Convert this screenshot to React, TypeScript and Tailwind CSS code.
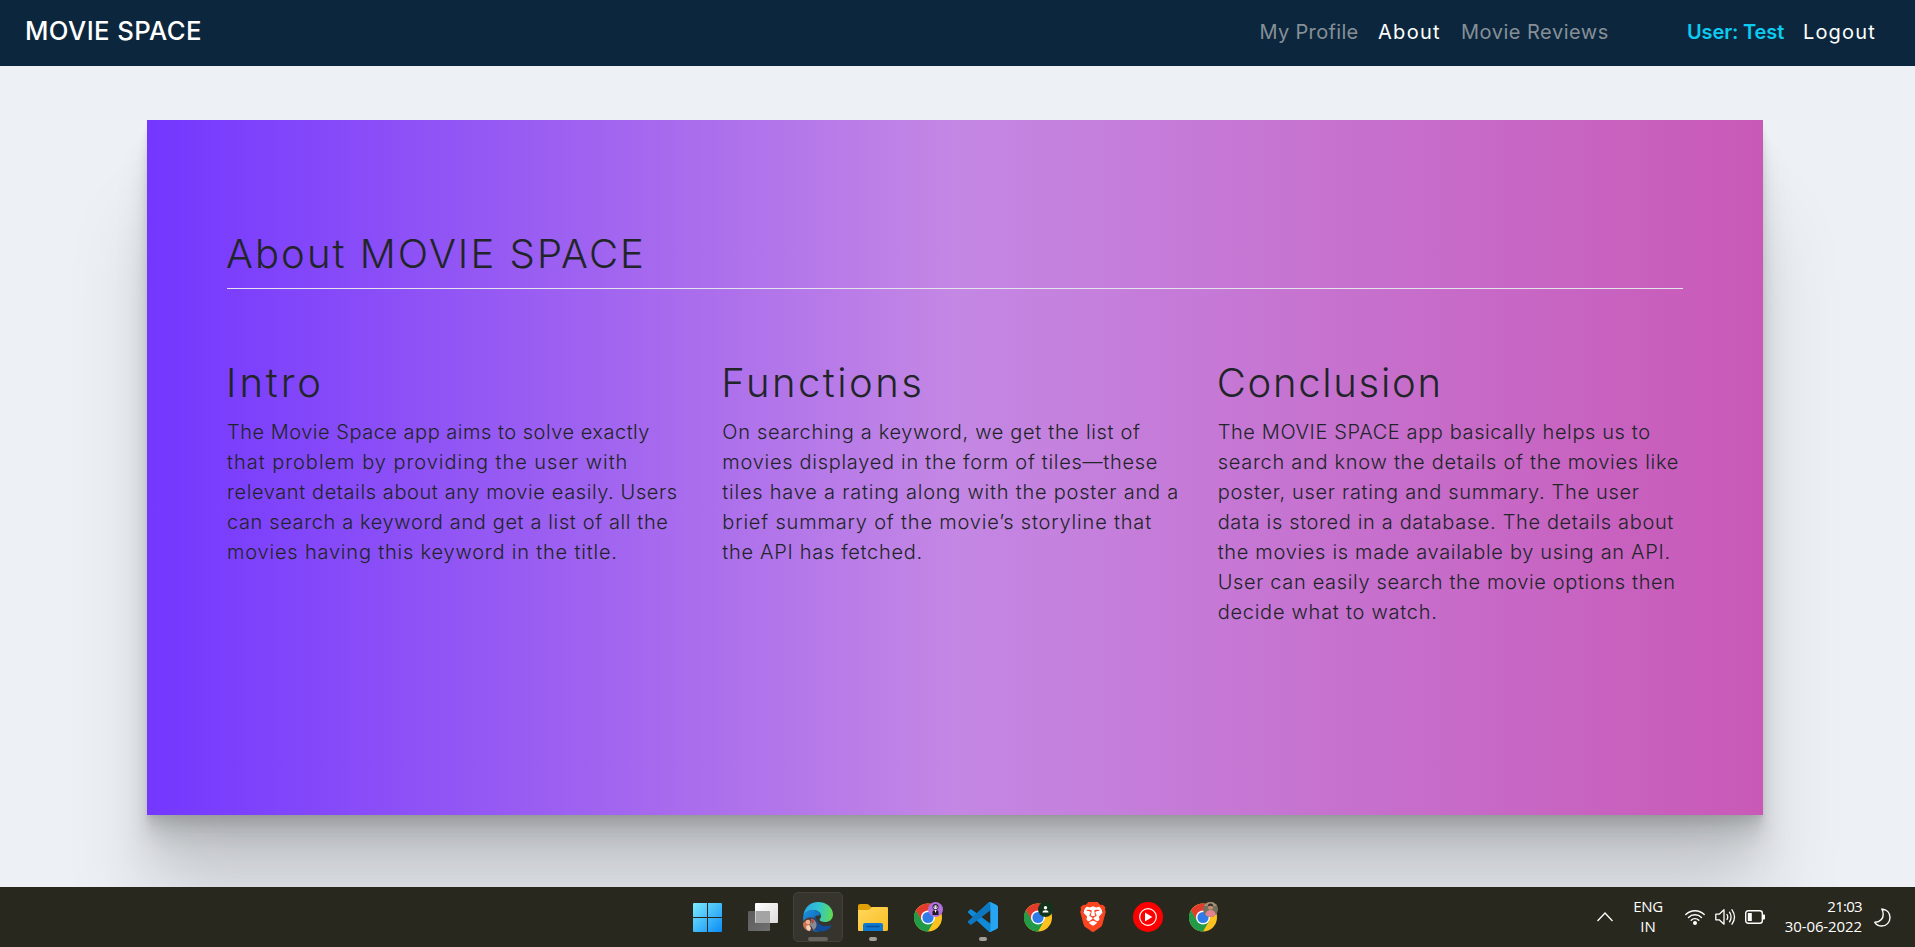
import type { ReactNode } from "react";
import { SiBrave } from "react-icons/si";

type Line = [text: string, tracking: string];

const intro: Line[] = [
  ["The Movie Space app aims to solve exactly", "tracking-[0.51px]"],
  ["that problem by providing the user with", "tracking-[0.975px]"],
  ["relevant details about any movie easily. Users", "tracking-[0.6px]"],
  ["can search a keyword and get a list of all the", "tracking-[0.625px]"],
  ["movies having this keyword in the title.", "tracking-[0.805px]"],
];

const functions: Line[] = [
  ["On searching a keyword, we get the list of", "tracking-[0.675px]"],
  ["movies displayed in the form of tiles—these", "tracking-[0.71px]"],
  ["tiles have a rating along with the poster and a", "tracking-[0.775px]"],
  ["brief summary of the movie’s storyline that", "tracking-[0.815px]"],
  ["the API has fetched.", "tracking-[0.695px]"],
];

const conclusion: Line[] = [
  ["The MOVIE SPACE app basically helps us to", "tracking-[0.61px]"],
  ["search and know the details of the movies like", "tracking-[0.72px]"],
  ["poster, user rating and summary. The user", "tracking-[0.695px]"],
  ["data is stored in a database. The details about", "tracking-[0.645px]"],
  ["the movies is made available by using an API.", "tracking-[0.685px]"],
  ["User can easily search the movie options then", "tracking-[0.645px]"],
  ["decide what to watch.", "tracking-[0.74px]"],
];

function Column({ title, tracking, lines }: { title: string; tracking: string; lines: Line[] }) {
  return (
    <section>
      <h2 className={`mb-[10px] -ml-px whitespace-nowrap text-[40px] font-light leading-[48px] ${tracking}`}>{title}</h2>
      <p className="text-[20px] font-light leading-[30px]">
        {lines.map(([text, t]) => (
          <span key={text} className={`block whitespace-nowrap ${t}`}>
            {text}
          </span>
        ))}
      </p>
    </section>
  );
}

function Task({ children, active, running }: { children: ReactNode; active?: boolean; running?: boolean }) {
  return (
    <div
      className={`relative flex h-[50px] w-[50px] items-center justify-center rounded-[5px] ${
        active ? "border border-[#44413a] bg-[#35342d]" : ""
      }`}
    >
      {children}
      {active && <span className="absolute bottom-0 h-1 w-5 rounded-full bg-[#66625e]" />}
      {running && <span className="absolute bottom-px h-1 w-2 rounded-full bg-[#a19d98]" />}
    </div>
  );
}

function Chrome({ children }: { children?: ReactNode }) {
  return (
    <svg width="30" height="30" viewBox="0 0 30 30">
      <circle cx="15" cy="15.5" r="14" fill="#fcc31e" />
      <path d="M15 15.5 2.88 8.5A14 14 0 0 1 27.12 8.5H15Z" fill="#e33b2e" />
      <path d="M2.88 8.5A14 14 0 0 0 15 29.5L21.06 19 15 15.5 8.94 19Z" fill="#229a48" />
      <path d="M2.88 8.5 8.94 19 15 15.5V8.5Z" fill="#e33b2e" />
      <path d="M2.88 8.5 8.94 19 11 22 15 29.5A14 14 0 0 1 2.88 8.5Z" fill="#229a48" />
      <circle cx="15" cy="15.5" r="7" fill="#fff" />
      <circle cx="15" cy="15.5" r="5.6" fill="#2f7be8" />
      {children}
    </svg>
  );
}

function Edge() {
  return (
    <svg width="30" height="30" viewBox="0 0 30 30">
      <defs>
        <linearGradient id="edgeTop" x1="0" y1="0.4" x2="1" y2="0.5">
          <stop offset="0" stopColor="#2aa6e6" />
          <stop offset="0.5" stopColor="#30c5d0" />
          <stop offset="1" stopColor="#5fdc50" />
        </linearGradient>
        <linearGradient id="edgeLow" x1="0" y1="0" x2="1" y2="1">
          <stop offset="0" stopColor="#1b93e2" />
          <stop offset="1" stopColor="#0c59a4" />
        </linearGradient>
      </defs>
      <path d="M0.4 14C1 6 7 0 15 0c9 0 15 6 15 12.500 0 5-4 7.500-8 7.500-3.500 0-5.500-1.200-5.500-2.200 0-.8 1.500-1.500 1.500-4C18 10.500 14.500 8 10.500 8 5.500 8 1.500 11 .4 14Z" fill="url(#edgeTop)" />
      <path d="M0.200 15C.8 10.500 5 8 9.500 8c4.500 0 8.500 2.500 8.500 5.500-5 -1-8.500 2.500-8.500 6.500 0 5 3.500 9 8 9.700C8 31-.8 24 .2 15Z" fill="url(#edgeLow)" />
      <path d="M13 14.500C10 16 9.500 19 9.500 20.500c.5 5.500 4.500 9 9.500 9 4 0 7.500-2.500 9.300-5.500.4-.7-.2-1.100-.8-.8C21 26 13 22 13 14.500Z" fill="#114c9b" />
      <circle cx="7" cy="22.500" r="7.200" fill="#4f3c3a" />
      <path d="M0 21c2-1 4-4 6-3l2 4-2 7C2 28-.5 25 0 21Z" fill="#c97352" />
      <path d="M8 17c3 0 5 2 5.500 5s-1.500 5-3 6l-3-5Z" fill="#858b98" />
      <circle cx="5" cy="20" r="2.200" fill="#f2b18c" />
      <path d="m3 24 3-1 2 3-1 3-3-1Z" fill="#f1d4bc" />
      <path d="m8 18 2-1 1 3-2 2Z" fill="#b3483e" />
    </svg>
  );
}

export default function App() {
  return (
    <div className="flex h-[947px] w-[1915px] flex-col overflow-hidden bg-[#edf1f6] font-['Inter','Liberation_Sans',sans-serif] text-[#212529]">
      <header className="flex h-[66px] shrink-0 items-center justify-between bg-[#0c273d] pl-[25px] pr-[40px] pb-[4px] text-white">
        <div className="whitespace-nowrap text-[25.7px] font-medium tracking-[0.4px]">MOVIE SPACE</div>
        <nav className="flex whitespace-nowrap pt-[2px] text-[20px] font-normal">
          <a className="w-[118.500px] tracking-[0.33px] text-[#868f97]">My Profile</a>
          <a className="w-[83px] tracking-[1.3px]">About</a>
          <a className="w-[226px] tracking-[0.5px] text-[#868f97]">Movie Reviews</a>
          <a className="w-[116px] font-semibold tracking-[-0.13px] text-[#0dcaf0]">User: Test</a>
          <a className="w-[72px] tracking-[1.15px]">Logout</a>
        </nav>
      </header>

      <main className="flex-1 overflow-hidden pl-[147px] pt-[54px]">
        <article className="h-[695px] w-[1616px] bg-linear-to-r/srgb from-[#7337ff] via-[#c487e4] to-[#c959b7] px-20 pt-[110px] shadow-[0_2.8px_2.2px_rgba(0,0,0,0.034),0_6.7px_5.3px_rgba(0,0,0,0.048),0_12.5px_10px_rgba(0,0,0,0.06),0_22.3px_17.9px_rgba(0,0,0,0.072),0_41.8px_33.4px_rgba(0,0,0,0.086),0_100px_80px_rgba(0,0,0,0.12)]">
          <div className="h-[59px] border-b border-[#e4e2ec]">
            <h1 className="-ml-px whitespace-nowrap text-[40px] font-light leading-[48px] tracking-[2.05px]">
              About MOVIE SPACE
            </h1>
          </div>
          <div className="grid grid-cols-3 gap-[30px] pt-[70px]">
            <Column title="Intro" tracking="tracking-[2.9px]" lines={intro} />
            <Column title="Functions" tracking="tracking-[2.47px]" lines={functions} />
            <Column title="Conclusion" tracking="tracking-[1.72px]" lines={conclusion} />
          </div>
        </article>
      </main>

      <footer className="relative z-10 flex h-[60px] shrink-0 items-center bg-[#29281e] pl-[683px] font-['Open_Sans','Noto_Sans',sans-serif] text-[15px] leading-5 text-white">
        <div className="flex gap-[5px]">
          <Task>
            <svg className="mr-px" width="29" height="29" viewBox="0 0 29 29">
              <defs>
                <linearGradient id="win" x1="0" y1="0" x2="29" y2="29" gradientUnits="userSpaceOnUse">
                  <stop offset="0" stopColor="#7cebff" />
                  <stop offset="1" stopColor="#0a8cf5" />
                </linearGradient>
              </defs>
              <path d="M1 0h13v14H0V1q0-1 1-1ZM15 0h13q1 0 1 1v13H15ZM0 15h14v14H1q-1 0-1-1ZM15 15h14v13q0 1-1 1H15Z" fill="url(#win)" />
            </svg>
          </Task>
          <Task>
            <svg width="30" height="28" viewBox="0 0 30 28">
              <defs>
                <linearGradient id="tvBack" x1="0" y1="0" x2="1" y2="1">
                  <stop offset="0" stopColor="#5c5c5c" />
                  <stop offset="1" stopColor="#707070" />
                </linearGradient>
                <linearGradient id="tvFront" x1="0" y1="0" x2="1" y2="1">
                  <stop offset="0" stopColor="#ffffff" />
                  <stop offset="1" stopColor="#dcdcdc" />
                </linearGradient>
              </defs>
              <rect y="8" width="22" height="20" rx="1" fill="url(#tvBack)" />
              <rect x="7" width="23" height="20" rx="1" fill="url(#tvFront)" />
              <path d="M7.500 8H22v12H7.500Z" fill="#a4a4a4" />
            </svg>
          </Task>
          <Task active>
            <Edge />
          </Task>
          <Task running>
            <svg width="30" height="27" viewBox="0 0 30 27">
              <defs>
                <linearGradient id="folder" x1="0" y1="0" x2="1" y2="1">
                  <stop offset="0" stopColor="#ffd85e" />
                  <stop offset="1" stopColor="#f9bd22" />
                </linearGradient>
              </defs>
              <path d="M0 2q0-2 2-2h7q1 0 2 1l2 2h5v6H0Z" fill="#e0a008" />
              <path d="M0 7q0-1 1-1h9q1 0 2-1l1-1q1-1 2-1h14q1 0 1 1v21q0 2-1 2H1q-1 0-1-1Z" fill="url(#folder)" />
              <path d="M5 27v-6q0-2 2-2h16q2 0 2 2v6Z" fill="#0f78d0" />
              <path d="M9 22.500h12" stroke="#0a4f95" strokeWidth="1.500" strokeLinecap="round" />
            </svg>
          </Task>
          <Task>
            <Chrome>
              <circle cx="22.500" cy="7.500" r="7.500" fill="#b36fdd" />
              <circle cx="22.500" cy="5" r="3" fill="#2a2430" />
              <circle cx="22.500" cy="5.200" r="2" fill="#e9e2ee" />
              <path d="M19.500 13V10q0-2 3-2t3 2v3Z" fill="#1f1b24" />
              <path d="m21.500 8 1 3 1-3Z" fill="#fff" />
              <path d="M21 5h1m1 0h1" stroke="#2a2430" strokeWidth=".8" />
            </Chrome>
          </Task>
          <Task running>
            <svg width="30" height="30" viewBox="0 0 100 100">
              <path d="M96.500 10.600 75.900.7a6.200 6.200 0 0 0-7.100 1.200L29.400 37.900 12.200 24.900a4.200 4.200 0 0 0-5.300.2L1.400 30.200a4.200 4.200 0 0 0 0 6.200l67.400 61.700a6.200 6.200 0 0 0 7.100 1.200l20.600-9.900Z" fill="#1089d6" />
              <path d="M75 27.300 1.400 69.800v-.1a4.200 4.200 0 0 1 0-6.100L68.800 1.900Z" fill="#0b6eb8" />
              <path d="m75 27.300-62.800 47.800a4.200 4.200 0 0 1-5.300-.2L1.400 69.800a4.200 4.200 0 0 1 0-6.200L68.800 1.900Z" fill="#0d78bf" />
              <path d="M45.100 50 75 27.300v45.400Z" fill="#29281e" />
              <path d="M75.900 99.300a6.200 6.200 0 0 1-7.100-1.200c2.300 2.300 6.200.7 6.200-2.600v-91c0-3.300-3.900-4.900-6.200-2.600A6.200 6.200 0 0 1 75.900.7l20.600 9.900a6.200 6.200 0 0 1 3.500 5.600v67.600a6.200 6.200 0 0 1-3.500 5.600Z" fill="#27a4f2" />
            </svg>
          </Task>
          <Task>
            <Chrome>
              <circle cx="22.500" cy="7.500" r="7.500" fill="#12341d" />
              <circle cx="22.500" cy="5.800" r="1.700" fill="#fff" />
              <path d="M19.500 10.500q0-2.300 3-2.300t3 2.300Z" fill="#fff" />
            </Chrome>
          </Task>
          <Task>
            <svg width="26" height="30" viewBox="0 0 26 30">
              <path d="M5 4h16l2 8-4 12-6 4-6-4L3 12Z" fill="#fff" />
              <svg x="-2" y="0" width="30" height="30" viewBox="0 0 30 30">
                <SiBrave size={30} color="#fb4420" />
              </svg>
            </svg>
          </Task>
          <Task>
            <svg width="30" height="30" viewBox="0 0 30 30">
              <circle cx="15" cy="15" r="15" fill="#f00" />
              <circle cx="15" cy="15" r="8.300" fill="none" stroke="#fff" strokeWidth="1.200" />
              <path d="m12 10.500 7.300 4.500-7.300 4.500Z" fill="#fff" />
            </svg>
          </Task>
          <Task>
            <Chrome>
              <clipPath id="avatar">
                <circle cx="22.500" cy="7.500" r="7.500" />
              </clipPath>
              <g clipPath="url(#avatar)">
                <path d="M15 0h15v15H15Z" fill="#74705a" />
                <path d="M15 0h15v4H15Z" fill="#a08f78" />
                <path d="M17 15q0-7 5.500-7t5.500 7Z" fill="#e3838f" />
                <circle cx="22.500" cy="5" r="2.600" fill="#c48b78" />
                <path d="M19.800 4.500q0-3 2.700-3t2.700 3q-2.700-1.500-5.400 0Z" fill="#3c2b26" />
              </g>
            </Chrome>
          </Task>
        </div>

        <div className="ml-[369px] flex items-center">
          <svg width="16" height="10" viewBox="0 0 16 10" fill="none" stroke="#fff" strokeWidth="1.300">
            <path d="m.5 9 7.500-8 7.500 8" />
          </svg>
          <div className="ml-[20px] w-[30px] pb-[2px] text-center">
            <div className="tracking-[-0.3px]">ENG</div>
            <div>IN</div>
          </div>
          <svg className="ml-[22px]" width="20" height="16" viewBox="0 0 20 16" fill="none" stroke="#fff" strokeWidth="1.400" strokeLinecap="round">
            <path d="M.8 5.600a13 13 0 0 1 18.400 0M3.500 8.500a9.200 9.200 0 0 1 13 0M6.200 11.200a5.400 5.400 0 0 1 7.600 0" />
            <circle cx="10" cy="14" r="1.300" fill="#fff" />
          </svg>
          <svg className="ml-[10px]" width="21" height="18" viewBox="0 0 21 18" fill="none" stroke="#fff" strokeWidth="1.300" strokeLinecap="round" strokeLinejoin="round">
            <path d="M.8 6.200h3.400L9 1.800v14.400L4.200 11.800H.8ZM12 6.500q1.500 2.500 0 5M14.500 4.200q3.200 4.800 0 9.600M17 1.800q5 7.200 0 14.400" />
          </svg>
          <svg className="ml-[9px]" width="21" height="14" viewBox="0 0 21 14" fill="none" stroke="#fff" strokeWidth="1.400">
            <rect x=".7" y=".7" width="16.600" height="12.600" rx="2.500" />
            <path d="M2.800 3h4v8h-4Z" fill="#fff" stroke="none" />
            <path d="M17.500 4.500h1.800q.7 0 .7.700v3.600q0 .7-.7.700h-1.800Z" fill="#fff" stroke="none" />
          </svg>
          <div className="ml-[14px] w-[82px] whitespace-nowrap pb-[2px] text-right">
            <div className="tracking-[-0.7px]">21:03</div>
            <div className="tracking-[-0.1px]">30-06-2022</div>
          </div>
          <svg className="ml-[12px]" width="17" height="19" viewBox="0 0 17 19" fill="none" stroke="#fff" strokeWidth="1.400" strokeLinejoin="round">
            <path d="M7.800 1C13 1.500 16 5 16 9.500c0 5-3.700 8.500-8.300 8.500-3 0-5.500-1.400-6.900-3.700C6 13.800 9.200 11 9.200 6.500c0-2-.4-3.800-1.400-5.500Z" />
          </svg>
        </div>
      </footer>
    </div>
  );
}
